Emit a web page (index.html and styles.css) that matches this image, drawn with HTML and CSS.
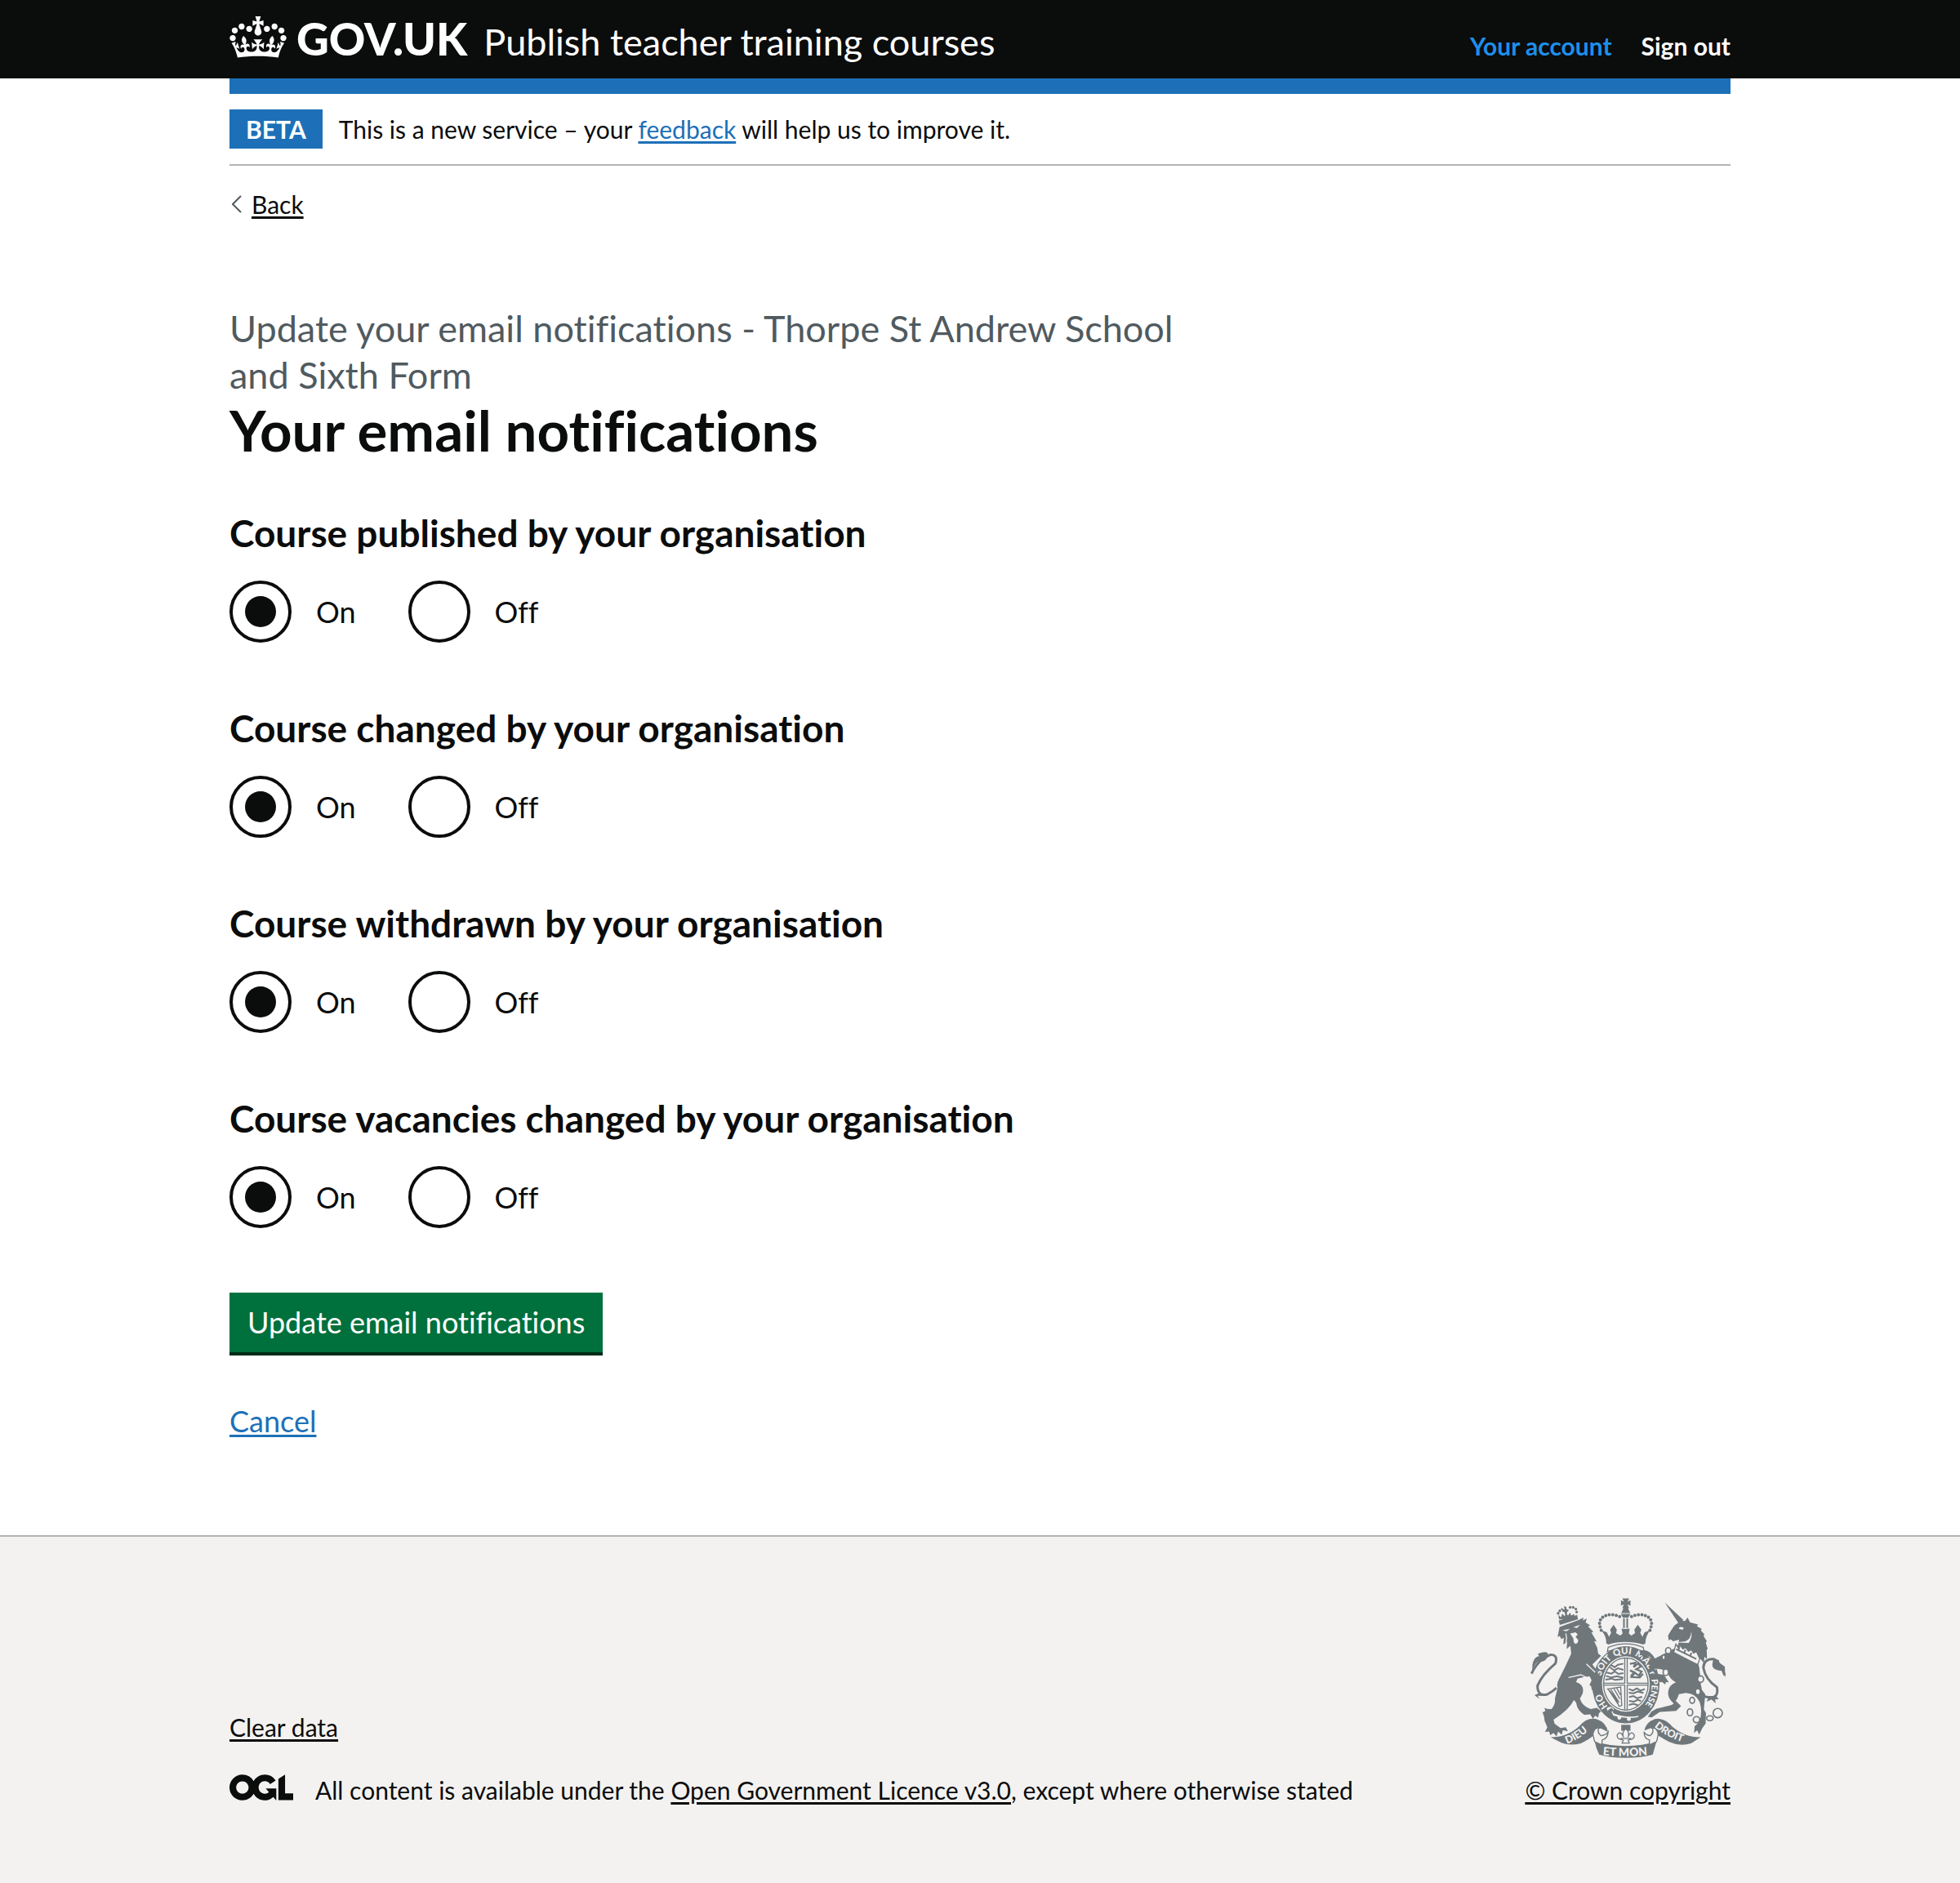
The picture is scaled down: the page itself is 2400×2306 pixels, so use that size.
FILE: index.html
```html
<!DOCTYPE html>
<html lang="en">
<head>
<meta charset="utf-8">
<meta name="viewport" content="width=device-width, initial-scale=1">
<title>Your email notifications - Publish teacher training courses</title>
<link rel="stylesheet" href="styles.css">
</head>
<body>
<header class="header">
  <div class="container header-inner">
    <a class="logo" href="#">
      <svg class="crown" viewBox="0 0 132 97" aria-hidden="true"><path fill="currentColor" fill-rule="evenodd" d="M25 30.2c3.5 1.5 7.7-.2 9.1-3.7 1.5-3.6-.2-7.8-3.9-9.2-3.6-1.4-7.6.3-9.1 3.9-1.4 3.5.3 7.5 3.9 9zM9 39.5c3.6 1.5 7.8-.2 9.2-3.7 1.5-3.6-.2-7.8-3.9-9.1-3.6-1.5-7.6.2-9.1 3.8-1.4 3.5.3 7.5 3.8 9zM4.4 57.2c3.5 1.5 7.7-.2 9.1-3.8 1.5-3.6-.2-7.7-3.9-9.1-3.5-1.5-7.6.3-9.1 3.8-1.4 3.5.3 7.6 3.9 9.1zm38.3-21.4c3.5 1.5 7.7-.2 9.1-3.8 1.5-3.6-.2-7.7-3.9-9.1-3.6-1.5-7.6.3-9.1 3.8-1.3 3.6.4 7.7 3.9 9.1zm64.4-5.6c-3.6 1.5-7.8-.2-9.1-3.7-1.5-3.6.2-7.8 3.8-9.2 3.6-1.4 7.7.3 9.2 3.9 1.3 3.5-.4 7.5-3.9 9zm15.9 9.3c-3.6 1.5-7.7-.2-9.1-3.7-1.5-3.6.2-7.8 3.7-9.1 3.6-1.5 7.7.2 9.2 3.8 1.5 3.5-.3 7.5-3.8 9zm4.7 17.7c-3.6 1.5-7.8-.2-9.2-3.8-1.5-3.6.2-7.7 3.9-9.1 3.6-1.5 7.7.3 9.2 3.8 1.3 3.5-.4 7.6-3.9 9.1zM89.3 35.8c-3.6 1.5-7.8-.2-9.2-3.8-1.4-3.6.2-7.7 3.9-9.1 3.6-1.5 7.7.3 9.2 3.8 1.4 3.6-.3 7.7-3.9 9.1zM69.7 17.7l8.9 4.7V9.3l-8.9 2.8c-.2-.3-.5-.6-.9-.9L72.4 0H59.6l3.5 11.2c-.3.3-.6.5-.9.9l-8.8-2.8v13.1l8.8-4.7c.3.3.6.7.9.9l-5 15.4v.1c-.2.8-.4 1.6-.4 2.4 0 4.1 3.1 7.5 7 8.1h.2c.3 0 .7.1 1 .1.4 0 .7 0 1-.1h.2c4-.6 7.1-4.1 7.1-8.1 0-.8-.1-1.7-.4-2.4V34l-5.1-15.4c.4-.2.7-.6 1-.9zM66 92.8c16.9 0 32.8 1.1 47.1 3.2 4-16.9 8.9-26.7 14-33.5l-9.6-3.4c1 4.9 1.1 7.2 0 10.2-1.5-1.4-3-4.3-4.2-8.7L108.6 76c2.8-2 5-3.2 7.5-3.3-4.4 9.4-10 11.9-13.6 11.2-4.3-.8-6.3-4.6-5.6-7.9 1-4.7 5.7-5.9 8-.5 4.3-8.7-3-11.4-7.6-8.8 7.1-7.2 7.9-13.5 2.1-21.1-8 6.1-8.1 12.3-4.5 20.8-4.7-5.4-12.1-2.5-9.5 6.2 3.4-5.2 7.9-2 7.2 3.1-.6 4.3-6.4 7.8-13.5 7.2-10.3-.9-10.9-8-11.2-13.8 2.5-.5 7.1 1.8 11 7.3L80.2 60c-4.1 4.4-8 5.3-12.3 5.4 1.4-4.4 8-11.6 8-11.6H55.5s6.4 7.2 7.9 11.6c-4.2-.1-8-1-12.3-5.4l1.4 16.4c3.9-5.5 8.5-7.7 10.9-7.3-.3 5.8-.9 12.8-11.1 13.8-7.2.6-12.9-2.9-13.5-7.2-.7-5 3.8-8.3 7.1-3.1 2.7-8.7-4.6-11.6-9.4-6.2 3.7-8.5 3.6-14.7-4.6-20.8-5.8 7.6-5 13.9 2.2 21.1-4.7-2.6-11.9.1-7.7 8.8 2.3-5.5 7.1-4.2 8.1.5.7 3.3-1.3 7.1-5.7 7.9-3.5.7-9-1.8-13.5-11.2 2.5.1 4.7 1.3 7.5 3.3l-4.7-15.4c-1.2 4.4-2.7 7.2-4.3 8.7-1.1-3-.9-5.3 0-10.2l-9.5 3.4c5 6.9 9.9 16.7 14 33.5 14.8-2.1 30.8-3.2 47.7-3.2z"/></svg>
      <span>GOV.UK</span>
    </a>
    <a class="service-name" href="#">Publish teacher training courses</a>
    <nav class="header-nav" aria-label="Account">
      <a class="active" href="#">Your account</a>
      <a href="#">Sign out</a>
    </nav>
  </div>
</header>

<div class="container">
  <div class="phase-banner">
    <strong class="tag">BETA</strong>
    <span>This is a new service – your <a class="link" href="#">feedback</a> will help us to improve it.</span>
  </div>
  <div class="back">
    <svg class="back-arrow" viewBox="0 0 12 22" aria-hidden="true"><path d="M11 1L1 11l10 10" fill="none" stroke="currentColor" stroke-width="2"/></svg>
    <a class="plain-link" href="#">Back</a>
  </div>
  <main class="main">
    <h1 class="title"><span class="caption">Update your email notifications - Thorpe St Andrew School and Sixth Form</span>Your email notifications</h1>
    <form class="form">
      <fieldset class="group">
        <legend>Course published by your organisation</legend>
        <div class="radios">
          <div class="radio"><input type="radio" id="published-on" name="published" checked><label for="published-on">On</label></div>
          <div class="radio"><input type="radio" id="published-off" name="published"><label for="published-off">Off</label></div>
        </div>
      </fieldset>
      <fieldset class="group">
        <legend>Course changed by your organisation</legend>
        <div class="radios">
          <div class="radio"><input type="radio" id="changed-on" name="changed" checked><label for="changed-on">On</label></div>
          <div class="radio"><input type="radio" id="changed-off" name="changed"><label for="changed-off">Off</label></div>
        </div>
      </fieldset>
      <fieldset class="group">
        <legend>Course withdrawn by your organisation</legend>
        <div class="radios">
          <div class="radio"><input type="radio" id="withdrawn-on" name="withdrawn" checked><label for="withdrawn-on">On</label></div>
          <div class="radio"><input type="radio" id="withdrawn-off" name="withdrawn"><label for="withdrawn-off">Off</label></div>
        </div>
      </fieldset>
      <fieldset class="group">
        <legend>Course vacancies changed by your organisation</legend>
        <div class="radios">
          <div class="radio"><input type="radio" id="vacancies-on" name="vacancies" checked><label for="vacancies-on">On</label></div>
          <div class="radio"><input type="radio" id="vacancies-off" name="vacancies"><label for="vacancies-off">Off</label></div>
        </div>
      </fieldset>
      <button class="button" type="submit">Update email notifications</button>
    </form>
    <p class="cancel"><a class="link" href="#">Cancel</a></p>
  </main>
</div>

<footer class="footer">
  <div class="container footer-inner">
    <div class="footer-meta">
      <a class="plain-link" href="#">Clear data</a>
      <div class="licence">
        <svg class="ogl" viewBox="0 0 483 196" role="img" aria-label="Open Government Licence"><path fill="currentColor" d="M421.500 142.800V.1l-50.700 32.300v161.100h112.400v-50.700zm-122.300-9.600A47.120 47.120 0 0 1 221 97.800c0-26 21.100-47.100 47.100-47.100 16.700 0 31.400 8.700 39.700 21.800l42.700-27.200A97.630 97.630 0 0 0 268.100 0c-36.500 0-68.300 20.100-85.100 49.700A98 98 0 0 0 97.800 0C43.900 0 0 43.900 0 97.800s43.900 97.800 97.800 97.800c36.500 0 68.300-20.100 85.100-49.700a97.760 97.760 0 0 0 149.600 25.400l19.400 22.200h3v-87.800h-80l24.300 27.500zM97.800 145c-26 0-47.100-21.100-47.100-47.100s21.100-47.100 47.100-47.100 47.100 21.100 47.100 47.100S123.800 145 97.800 145"/></svg>
        <span>All content is available under the <a class="plain-link" href="#">Open Government Licence v3.0</a>, except where otherwise stated</span>
      </div>
    </div>
    <div class="copyright">
      <svg class="crest" viewBox="42 50 718 588" role="img" aria-label="Royal coat of arms">
        <defs>
          <path id="garter" d="M327 448A95 112 0 1 1 459 448"/>
          <path id="ribbon-left" d="M176 586Q232 566 280 512"/>
          <path id="ribbon-mid" d="M308 627Q392 636 478 627"/>
          <path id="ribbon-right" d="M497 523Q550 568 625 586"/>
        </defs>
        <!-- crown above the garter -->
        <g class="ink">
          <path d="M380 51h25l-6 12 11-5v20l-11-5 6 14h-25l6-14-11 5V58l11 5zM384 87h17l8 18H376zM374 108h36l-8 14h-20zM383 124h6v36h-6zM395 124h6v36h-6z"/>
          <path d="M303 168l20 8 8 16 8-14-4-12 13-18 12 18-3 13 15 9 9-8-4-18 14 2 16-2-3 18 9 8 14-9-3-13 13-18 13 18-4 12 8 14 8-16 20-8q-18 24-17 48l-8 5q-70-20-128 0l-8-5q2-24-18-48z"/>
        </g>
        <path d="M370 118C330 100 290 118 297 152L306 180M414 118C454 100 494 118 487 152L478 180" fill="none" stroke="#6f777b" stroke-width="12" stroke-dasharray="0 13" stroke-linecap="round"/>
        <path class="line" stroke-width="4" d="M328 231q65-26 129 0l3 16q-68-28-135 0z"/>
        <!-- garter and shield -->
        <ellipse class="ink" cx="393" cy="369" rx="124" ry="142"/>
        <ellipse class="paper" cx="393" cy="366" rx="88" ry="102"/>
        <ellipse class="line" stroke-width="4" cx="393" cy="366" rx="82" ry="96"/>
        <path class="line" stroke-width="4" d="M389 270v93h-78M398 270v93h77M389 460v-90h-77M398 460v-90h77"/>
        <path class="line" stroke-width="6" d="M338 296l14 8 12-9 20-4M334 304l16 12 14-8 20 6M322 324l18 4 12-8 14 9 18-3M320 336l20 6 20-5 24 6M318 350l22-4 14 5 28-3M404 384l15 6 14-8 14 8 16-6M404 398l18 2 14-6 22 5M405 414l16-4 12 8 20-5M405 428l18 3 14-7 12 5M404 443l16-4 18 5"/>
        <path class="line" stroke-width="7" d="M408 292l20-4-6 16 16-14 10 12-17 10 20 8-10 15-18-12-12 15M408 316l18 8-12 16 30 2 12-14"/>
        <path class="line" stroke-width="4" d="M326 384l48-7 4 68-10 3Q355 410 326 384zM338 386l30 48M349 383l22 38M359 380l14 26M330 388l34 52"/>
        <text class="motto" font-size="34"><textPath href="#garter" startOffset="0">HO</textPath></text>
        <text class="motto" font-size="34"><textPath href="#garter" startOffset="118">SOIT</textPath></text>
        <text class="motto" font-size="34"><textPath href="#garter" startOffset="206">QUI</textPath></text>
        <text class="motto" font-size="34"><textPath href="#garter" startOffset="282">MAL</textPath></text>
        <text class="motto" font-size="34"><textPath href="#garter" startOffset="360">Y</textPath></text>
        <text class="motto" font-size="32"><textPath href="#garter" startOffset="394">PENSE</textPath></text>
        <path class="paper" d="M322 455q16-12 28 4-10 8-1 16 44 17 92 8l-4 5q-48 8-90-6-18-6-25-27z"/>
        <path class="ink" d="M328 462l12-8 9 9-9 6 6 10-8 15-14-14z"/>
        <circle class="paper" cx="369" cy="490" r="7"/><circle class="paper" cx="404" cy="495" r="7"/>
        <!-- lion -->
        <g class="ink">
          <path d="M146 132l68-20 3 16-67 21zM147 128l-2-17 10 10 4-14 9 10 4-15 8 12 8-11 4 11 11-6 1 17zM165 80l9 3 1 8 9 3-6 6-6 18-5-17-8-1 1-8 8-1z"/>
          <path d="M149 156l70-25 18-9-2 10 14-7-4 15 17 10-8 4 20 20-8 2 20 34-10-2 12 25 3 21 11 8-18 18-14 14 20 29 3 20 10 17 4 28-8-10-4 16-7-12-6 13-5-14-9 8-3-16-6-3 8-18-7-14q-20 0-45 8l-5 13q32 10 24 42l-10 19q10 30 40 38l22-4 16 12-8 8-3 16-11-8-8 12-10-16-22 1q-26-16-30-45l-8-9q-18 36-75 72l4 15 22 16 19-3 8 14-19-3-4 17-13-12-6 18-11-13-12 8-4-13-15 1 8-17-10-24q0-15-8-32 16 2 7-15 14 6 26 4 16-18 13-38l10-40q-5-14 5-32l20-40 25-53-3-30-14 12 2-26-14 10 2-26-9 6-6-12-8 4z"/>
          <path d="M49 297q4-30 25-33l-5-9q38-14 38 4-6 28-36 24-16 10-22 38zM57 407l15-7 20 10-24-1 8 12z"/>
        </g>
        <path class="line" stroke-width="9" d="M46 328q22-50 70-70 28 0 18 32-50 42-66 82 0 42 36 32 22-12 34-24"/>
        <path class="paper" d="M160 168l27-5-12 9zM200 157l25-9-12 12zM188 180l20-4 8 8-8 8 10 12q-2 14-10 14-8-2-8-20z"/>
        <path class="paper-line" stroke-width="4" d="M248 292l32 31M182 342l46-10 20 10M170 228q8-30 2-48"/>
        <g class="ink">
          <circle cx="144" cy="106" r="5"/><circle cx="150" cy="97" r="5"/><circle cx="158" cy="91" r="4"/><circle cx="188" cy="84" r="5"/><circle cx="199" cy="84" r="5"/><circle cx="209" cy="90" r="5"/><circle cx="212" cy="101" r="5"/>
        </g>
        <!-- unicorn -->
        <g class="ink">
          <path d="M536 66l69 65-17 13zM548 188q12-22 24-38l20-14 20-3 8-12 9 18 30 8-5 6 18 10-3 6 13 14-3 6 12 20-4 5 7 22-4 5q2 16 1 33l-9-8-2 23-12-15-4-2-85-35q9-22 10-34l-22 6-9-8-7 5z"/>
          <path d="M570 236l87 48q12 34 8 64 6 30 8 40l12 15q-2 26-5 56l8 14q-2 30-1 38l-13 18-11 23-8-16-11 10 2-25 18-16q12-40 0-74-14-30-50-32l-26 4q-6 20-12 24l20 20-18 18-60 4-30 20-14-2 13-20 19-10 37-9q22-5 26-10-24-22-20-44 2-24 28-34-26-16-31-38l-23-10-26-3 14 20 22 3 18 28-11-1-2 9-12-10-8 2-18-32q-14-16-14-28l-15-9 16-7-4-16 9 5-22-13-11 12-7-12-9 1 8-10-11-6 16-4q24-2 44 31z"/>
          <path d="M715 272l20 6 2 10 20 14 2 40-12-24q-38-2-36-24zM700 410l25 1 10 10-14 2 3 14-16-14-18 8z"/>
        </g>
        <path class="line" stroke-width="9" d="M672 408q66 24 56-30-42-28-50-72 2-34 38-32 22 10 41 60"/>
        <path class="paper" d="M592 156l14 2-4 9-15-5zM576 213l48 2q14-18 10-42-2 30-22 36z"/>
        <path fill="#f3f2f1" stroke="#6f777b" stroke-width="4" d="M577 219l8 13 8-8 10 13 10-6 10 14 11-6 8 13 11-5 12 26-8 22-88-45z"/>
        <path class="line" stroke-width="6" d="M578 238l74 36M590 230l-3 10M612 240l-4 12M634 251l-4 12"/>
        <g fill="#f3f2f1" stroke="#6f777b" stroke-width="5">
          <ellipse cx="549" cy="243" rx="10" ry="11"/><ellipse cx="532" cy="268" rx="6" ry="9"/><ellipse cx="540" cy="323" rx="10" ry="12"/><ellipse cx="668" cy="348" rx="11" ry="12"/><ellipse cx="658" cy="394" rx="9" ry="11"/><ellipse cx="637" cy="426" rx="9" ry="11"/><ellipse cx="629" cy="470" rx="10" ry="13"/><ellipse cx="653" cy="497" rx="12" ry="11"/><ellipse cx="702" cy="492" rx="12" ry="9"/><circle cx="731" cy="473" r="17"/>
        </g>
        <!-- fleur-de-lis and ribbon -->
        <path class="ink" d="M376 516h34v22h-34z"/>
        <path fill="#f3f2f1" stroke="#6f777b" stroke-width="4" d="M393 530q16 14 7 32 14-28 24-8 2 14-15 16l-8 3 5 10h-27l5-10-8-3q-16-2-15-16 10-20 24 8-9-18 8-32zM374 566h37"/>
        <g class="ink">
          <path d="M116 562q60 0 105-40 28-34 64-27 36 12 42 47l-24-12q-23-2-25 22-20 18-50 32-40 10-72-2z"/>
          <path d="M668 562q-60 0-105-40-28-34-64-27-32 12-38 42l22-8q22 0 24 22 20 16 46 28 40 18 80 5z"/>
          <path d="M278 576q50 18 114 18t114-18l-14 50q-40 12-100 12t-97-12q-12-24-17-50z"/>
        </g>
        <path fill="#f3f2f1" stroke="#6f777b" stroke-width="4" d="M272 552q2-24 22-26-8 20 8 30 18-2 26-14-2 26-22 30l-2 18-26-12zM512 552q-2-24-22-26 8 20-8 30-16-2-22-14 0 26 20 30l-1 18 27-12z"/>
        <text class="motto" font-size="38"><textPath href="#ribbon-left">DIEU</textPath></text>
        <text class="motto" font-size="42"><textPath href="#ribbon-mid">ET MON</textPath></text>
        <text class="motto" font-size="38"><textPath href="#ribbon-right">DROIT</textPath></text>
      </svg>
      <a class="plain-link" href="#">© Crown copyright</a>
    </div>
  </div>
</footer>
</body>
</html>
```
FILE: styles.css
```css
* {
  box-sizing: border-box;
}

body {
  margin: 0;
  min-height: 100vh;
  display: flex;
  flex-direction: column;
  background: #fff;
  color: #0b0c0c;
  font-family: Lato, "Liberation Sans", sans-serif;
  font-size: 30px;
  line-height: 38px;
  font-variant-ligatures: none;
}

.container {
  width: calc(100% - 60px);
  max-width: 1838px;
  margin: 0 auto;
}

.link {
  color: #1d70b8;
}

.plain-link {
  color: #0b0c0c;
}

.link,
.plain-link {
  text-decoration-thickness: 3px;
  text-underline-offset: 3px;
}

/* Header */
.header {
  background: #0b0c0c;
}

.header-inner {
  display: flex;
  align-items: baseline;
  min-height: 96px;
  padding-top: 20px;
}

.header a {
  color: #fff;
  text-decoration: none;
}

.header .active {
  color: #1d8feb;
}

.logo {
  display: flex;
  align-items: baseline;
  gap: 12px;
  margin-right: 20px;
  font-size: 55px;
  line-height: 54px;
  font-weight: 900;
}

.crown {
  width: 70px;
  height: 51px;
  align-self: flex-start;
}

.service-name {
  font-size: 45px;
  line-height: 54px;
}

.header-nav {
  display: flex;
  gap: 36px;
  margin-left: auto;
  font-weight: 700;
}

/* Phase banner and back link */
.phase-banner {
  display: flex;
  align-items: center;
  gap: 20px;
  padding: 19px 0;
  border-top: 19px solid #1d70b8;
  border-bottom: 2px solid #b1b4b6;
}

.tag {
  padding: 0 20px;
  background: #1d70b8;
  color: #fff;
  line-height: 48px;
}

.back {
  display: flex;
  align-items: center;
  gap: 12px;
  margin-top: 28px;
  padding-left: 3px;
}

.back-arrow {
  width: 12px;
  height: 22px;
  color: #505a5f;
}

/* Main content */
.main {
  max-width: 1206px;
  margin-top: 105px;
}

.title {
  margin: 0 0 58px;
  font-size: 69px;
  line-height: 78px;
}

.caption {
  display: block;
  color: #505a5f;
  font-size: 45px;
  line-height: 57px;
  font-weight: 400;
}

.group {
  margin: 0 0 76px;
  padding: 0;
  border: 0;
}

.group legend {
  padding: 0;
  margin-bottom: 30px;
  font-size: 46px;
  line-height: 57px;
  font-weight: 700;
}

.radios {
  display: flex;
  gap: 64px;
}

.radio {
  display: flex;
  align-items: center;
  gap: 30px;
  font-size: 36px;
}

.radio input {
  appearance: none;
  display: grid;
  place-items: center;
  width: 76px;
  height: 76px;
  margin: 0;
  border: 4px solid #0b0c0c;
  border-radius: 50%;
  background: #fff;
}

.radio input:checked::before {
  content: "";
  width: 38px;
  height: 38px;
  border-radius: 50%;
  background: #0b0c0c;
}

.button {
  display: block;
  margin-top: 79px;
  padding: 12px 22px 13px;
  border: 0;
  box-shadow: 0 4px 0 #002d18;
  background: #00703c;
  color: #fff;
  font: inherit;
  font-size: 36px;
  line-height: 48px;
}

.cancel {
  margin: 60px 0 116px;
  font-size: 36px;
  line-height: 48px;
}

/* Footer */
.footer {
  flex: 1;
  padding: 75px 0 95px;
  border-top: 2px solid #b1b4b6;
  background: #f3f2f1;
}

.footer-inner {
  display: flex;
  align-items: flex-end;
  justify-content: space-between;
}

.footer-meta {
  display: flex;
  flex-direction: column;
  align-items: flex-start;
  gap: 39px;
}

.licence {
  display: flex;
  align-items: flex-start;
  gap: 27px;
}

.ogl {
  width: 78px;
  height: 32px;
}

.copyright {
  display: flex;
  flex-direction: column;
  align-items: flex-end;
  gap: 20px;
}

.crest {
  width: 239px;
  height: 196px;
  margin-right: 6px;
}

.ink {
  fill: #6f777b;
}

.paper,
.motto {
  fill: #f3f2f1;
}

.motto {
  font-family: Lato, sans-serif;
  font-weight: 900;
}

.line {
  fill: none;
  stroke: #6f777b;
}

.paper-line {
  fill: none;
  stroke: #f3f2f1;
}
```
